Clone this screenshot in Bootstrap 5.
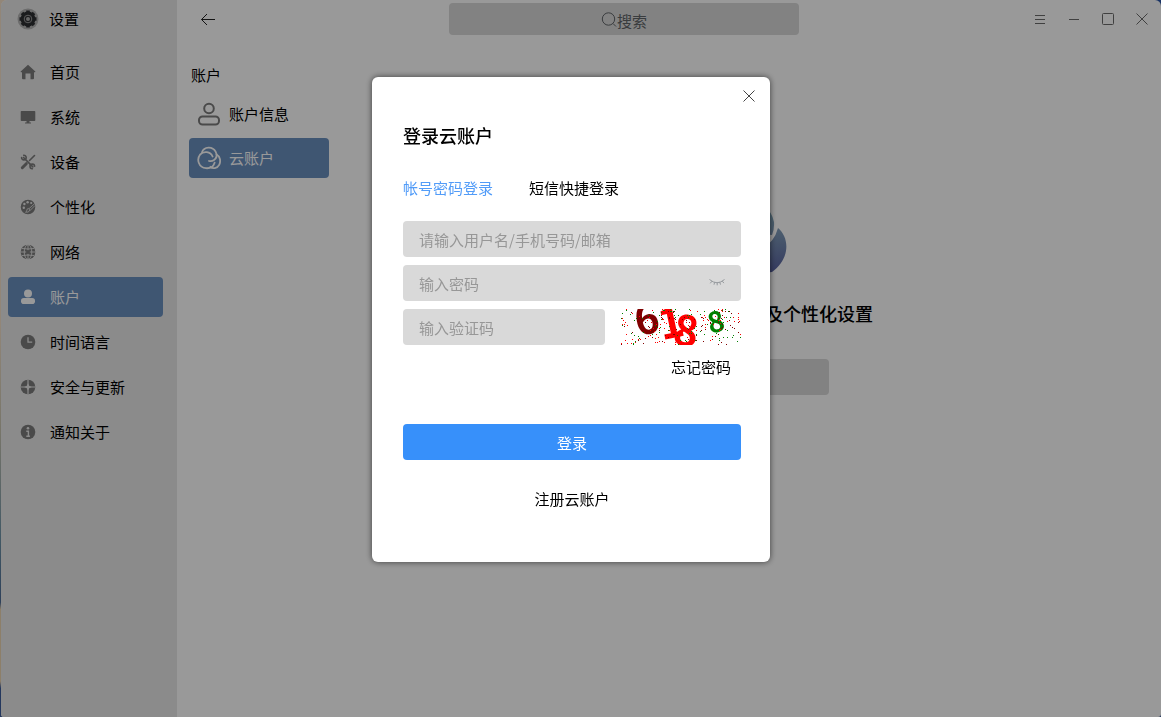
<!DOCTYPE html>
<html lang="zh-CN">
<head>
<meta charset="utf-8">
<meta name="viewport" content="width=device-width, initial-scale=1">
<title>设置</title>
<link href="https://cdn.jsdelivr.net/npm/bootstrap@5.3.0/dist/css/bootstrap.min.css" rel="stylesheet">
<style>
:root{--accent:#698fbf;--field:#d9d9d9}
body{font-family:"Noto Sans CJK SC",sans-serif;font-size:15px;line-height:24px;color:#000;
 background:linear-gradient(#f4e0c8 0 45%,#c8c4b0 60%,#6f94a8 75%,#4d6c96 84%,#ecd4b0 85% 95%,#3c5c9c 96%);}
.desk{padding-left:1px;background:linear-gradient(#2a55a8,#2a55a8) right top/12px 12px no-repeat}
.win{background:#fff;border-radius:6px 6px 3px 3px}
.side{width:176px;background:#e8e8e8;flex:none}
.bar{height:38px}
.main-bar{padding:0 2px 0 14px}
.side .bar{padding-left:16px;gap:10px}
.side-nav{padding:14px 14px 0 7px;gap:5px}
.item{height:40px;border-radius:4px;color:#000;text-decoration:none;display:flex;align-items:center}
.side .item{padding-left:12px;gap:14px}
.item svg{color:#7c7c7c;flex:none}
.item.active,.item.active svg{background:var(--accent);color:#fff}
.sub{width:156px;padding:25px 4px 0 12px;flex:none}
.sub h2{font-size:15px;line-height:24px;margin:0 0 7px 2px;font-weight:400}
.sub .item{padding-left:8px;gap:8px}
.plain{border:0;background:none;padding:0;width:34px;height:34px;display:flex;align-items:center;justify-content:center;color:#444}
.main-bar .plain{color:#6c6c6c}
.find{width:350px;height:32px;background:var(--field);border:0;border-radius:4px;color:#606468}
.cloud{padding-top:164px}
.cloud p{width:252px;font-size:18px;font-weight:500;margin:27px 0 34px;text-align:right}
.cloud button{width:164px;height:36px;border:0;border-radius:4px;background:var(--field)}
.veil{background:rgba(0,0,0,.4);padding:77px 19px 0 0}
.login{width:398px;background:#fff;border-radius:6px;box-shadow:0 0 6px rgba(0,0,0,.6);padding:2px 29px 51px 31px}
.close-row{margin-right:-25px}
.login h1{font-size:18px;line-height:24px;margin:10px 0 29px;font-weight:500}
.tabs{gap:36px;margin-bottom:21px}
.tabs button{border:0;background:none;padding:0;color:#000}
.tabs button.on{color:#529cf8}
.field{height:36px;background:var(--field);border:0;border-radius:4px;padding:0 16px;font-size:15px;color:#000}
.field:focus{background:var(--field);box-shadow:none}
.field::placeholder{color:#979797;opacity:1}
.code{width:202px}
.eye{right:7px;top:1px;color:#8d9296}
.forgot{margin:10px 10px 45px 0}
.go{height:36px;border:0;border-radius:4px;background:#3790fa;color:#fff;padding:2px 0 0;font-size:15px;line-height:24px}
.go:hover{background:#2b84ee;color:#fff}
.reg{margin-top:27px}
</style>
</head>
<body>
<div class="desk min-vh-100 d-flex">
<div class="win d-flex flex-grow-1 overflow-hidden">
 <aside class="side">
  <div class="bar d-flex align-items-center">
   <svg width="22" height="22" viewBox="0 0 22 22"><circle cx="11" cy="11" r="10.5" fill="#b4b4b4"/><g fill="none" stroke="#2d2f32"><circle cx="11" cy="11" r="5.500" stroke-width="3.800"/><path d="M11 2.500v17M2.500 11h17M5 5l12 12M17 5 5 17" stroke-width="3.600"/><circle cx="11" cy="11" r="3.800" fill="#2d2f32" stroke="#999" stroke-width="1"/><circle cx="11" cy="11" r="2" fill="#aaa" stroke="none"/></g></svg>
   <span>设置</span>
  </div>
  <nav class="side-nav d-flex flex-column">
   <a class="item" href="#"><svg width="16" height="16" viewBox="0 0 16 16" fill="currentColor"><path d="M8 .7 15.3 7.4q.4.8-.4.8H14v6q0 1-1 1h-2.500V9.500h-5v5.700H3q-1 0-1-1v-6h-.9q-.8 0-.4-.8z"/></svg>首页</a>
   <a class="item" href="#"><svg width="16" height="16" viewBox="0 0 16 16" fill="currentColor"><path d="M1.500 2h13q.8 0 .8.8v8.400q0 .8-.8.800H9.500v1.500H11V14.500H5V13.500h1.500V12h-5q-.8 0-.8-.8V2.800q0-.8.8-.8z"/></svg>系统</a>
   <a class="item" href="#"><svg width="16" height="16" viewBox="0 0 16 16" fill="none" stroke="currentColor" stroke-linecap="round"><path d="M3.500 3.500 12.800 12.800" stroke-width="1.700"/><path d="M2.300 13.700 6.300 9.700" stroke-width="3"/><path d="M9.500 6.500 14.500 1.500" stroke-width="1.600"/><path d="M1.600 3.500a2.300 2.300 0 1 0 2.100-2.200M14.600 12.300a2.300 2.300 0 1 0-2.200 2.400" stroke-width="1.600"/></svg>设备</a>
   <a class="item" href="#"><svg width="16" height="16" viewBox="0 0 16 16"><path fill="currentColor" d="M8 .7A7.300 7.300 0 1 0 15.300 8C15.300 3.500 12 .7 8 .7z"/><g fill="#e8e8e8"><circle cx="3.800" cy="8.700" r="1.200"/><circle cx="4.400" cy="5" r="1.200"/><circle cx="7.600" cy="3.300" r="1.200"/><circle cx="11.200" cy="4" r="1.100"/></g><path d="M14.800 4.500 8 10.600M15 6.500 9.500 12" stroke="#e8e8e8" stroke-width=".8"/><path d="M8.300 9.400 9.800 11Q9 14 5.500 13.200 7 12.500 6.800 11.200 7.200 9.500 8.300 9.400z" fill="currentColor" stroke="#e8e8e8" stroke-width=".8"/></svg>个性化</a>
   <a class="item" href="#"><svg width="16" height="16" viewBox="0 0 16 16"><circle cx="8" cy="8" r="7.300" fill="currentColor"/><g fill="none" stroke="#e8e8e8" stroke-width=".9"><ellipse cx="8" cy="8" rx="3.800" ry="7.300"/><path d="M8 .5v15M.5 8h15M2 4.500Q8 5.500 14 4.500M2 11.500Q8 10.500 14 11.500"/></g><circle cx="8" cy="8" r="2" fill="currentColor"/></svg>网络</a>
   <a class="item active" href="#" aria-current="page"><svg width="16" height="16" viewBox="0 0 16 16" fill="currentColor"><circle cx="8" cy="4.500" r="4"/><rect x="1" y="9" width="14" height="6" rx="2.800"/></svg>账户</a>
   <a class="item" href="#"><svg width="16" height="16" viewBox="0 0 16 16"><circle cx="8" cy="8" r="7.300" fill="currentColor"/><path d="M8 3.200V8.200h4.200" fill="none" stroke="#e8e8e8" stroke-width="1.300"/></svg>时间语言</a>
   <a class="item" href="#"><svg width="16" height="16" viewBox="0 0 16 16"><circle cx="8" cy="8" r="7.300" fill="currentColor"/><path d="M8 .7v14.600M.7 8h14.600" stroke="#e8e8e8" stroke-width="1.200"/><path d="M8 4.200 9.200 6.800 11.800 8 9.200 9.200 8 11.800 6.800 9.200 4.200 8 6.800 6.800z" fill="#e8e8e8"/></svg>安全与更新</a>
   <a class="item" href="#"><svg width="16" height="16" viewBox="0 0 16 16"><circle cx="8" cy="8" r="7.300" fill="currentColor"/><circle cx="8" cy="4.200" r="1.300" fill="#e8e8e8"/><path d="M6.300 7.200H8.400V12.300M6.300 12.300h3.600" fill="none" stroke="#e8e8e8" stroke-width="1.400"/></svg>通知关于</a>
  </nav>
 </aside>
 <div class="flex-grow-1 d-flex flex-column">
  <header class="bar main-bar d-flex align-items-center">
   <button class="plain" type="button" aria-label="返回"><svg width="16" height="16" viewBox="0 0 16 16" fill="none" stroke="#222"><path d="M15 8.500H1.500M7 3 1.500 8.500 7 14"/></svg></button>
   <button class="find mx-auto d-flex align-items-center justify-content-center" type="button"><svg width="16" height="16" viewBox="0 0 16 16" fill="none" stroke="currentColor"><circle cx="7.500" cy="8" r="6.200"/><path d="M12 12.500 15 15.500"/></svg><span class="pt-1">搜索</span></button>
   <button class="plain" type="button" aria-label="菜单"><svg width="16" height="16" viewBox="0 0 16 16" stroke="currentColor"><path d="M3 4.500h10M3 8.500h10M3 12.500h10"/></svg></button>
   <button class="plain" type="button" aria-label="最小化"><svg width="16" height="16" viewBox="0 0 16 16" stroke="currentColor"><path d="M3 8.500h10"/></svg></button>
   <button class="plain" type="button" aria-label="最大化"><svg width="16" height="16" viewBox="0 0 16 16" fill="none" stroke="currentColor"><rect x="2.500" y="2.500" width="11" height="11" rx="1"/></svg></button>
   <button class="plain" type="button" aria-label="关闭"><svg width="16" height="16" viewBox="0 0 16 16" stroke="currentColor"><path d="M2.500 2.500 13.500 13.500M13.500 2.500 2.500 13.500"/></svg></button>
  </header>
  <div class="d-flex flex-grow-1">
   <nav class="sub">
    <h2>账户</h2>
    <div class="d-flex flex-column gap-1">
     <a class="item" href="#"><svg width="24" height="24" viewBox="0 0 24 24" fill="none" stroke="currentColor" stroke-width="2"><circle cx="12" cy="6.500" r="4.800"/><rect x="2" y="14.500" width="20" height="8" rx="3.500"/></svg>账户信息</a>
     <a class="item active" href="#" aria-current="page"><svg width="24" height="24" viewBox="0 0 24 24" fill="none" stroke="currentColor" stroke-width="1.800" stroke-linecap="round"><path d="M5 6.200C7 .4 15.500-.2 18.600 5.600c1.700 3.200.9 6.600-1.600 8.500-1.600 1.100-3.400 1.300-5 .9"/><path d="M15.600 10.500C13.500 5.300 6.500 4.600 3 8.700-.6 13.400 1.600 21.500 9 22.200c4 .3 7.500-1.900 8.600-5.500"/><path d="M19.600 8.500C23.200 10.400 24 15.300 22.200 18.800 20.200 22.600 15.500 23 13.400 20.800"/></svg>云账户</a>
    </div>
   </nav>
   <main class="cloud flex-grow-1 d-flex flex-column align-items-center">
    <svg width="80" height="72" viewBox="0 0 80 72"><defs><linearGradient id="lg" gradientUnits="userSpaceOnUse" x1="0" y1="0" x2="0" y2="70"><stop offset="0" stop-color="#81aebc"/><stop offset=".4" stop-color="#7f9cb8"/><stop offset="1" stop-color="#5862a0"/></linearGradient></defs><path d="M12 20A28 28 0 0 1 67 20Q67.500 27 65 33L34 30 10 42z" fill="url(#lg)"/><path d="M71 26C83 36 83 57 65 70L50 72H28C-6 66-2 30 18 26L46 50Q66 45 71 26z" fill="url(#lg)"/></svg>
    <p>及个性化设置</p>
    <button type="button" aria-label="登录"></button>
   </main>
  </div>
 </div>
</div>
</div>

<div class="veil position-fixed top-0 start-0 w-100 h-100 d-flex justify-content-center align-items-start overflow-auto">
 <form class="login" role="dialog" aria-labelledby="dlg" onsubmit="return false">
  <div class="close-row d-flex justify-content-end"><button class="plain" type="button" aria-label="关闭"><svg width="16" height="16" viewBox="0 0 16 16" stroke="currentColor"><path d="M2.500 2.500 13.500 13.500M13.500 2.500 2.500 13.500"/></svg></button></div>
  <h1 id="dlg">登录云账户</h1>
  <div class="tabs d-flex" role="tablist"><button class="on" type="button" role="tab" aria-selected="true">帐号密码登录</button><button type="button" role="tab" aria-selected="false">短信快捷登录</button></div>
  <div class="d-flex flex-column gap-2">
   <input class="form-control field" type="text" aria-label="用户名" placeholder="请输入用户名/手机号码/邮箱">
   <div class="position-relative"><input class="form-control field" type="password" aria-label="密码" placeholder="输入密码">
    <button class="plain eye position-absolute" type="button" aria-label="显示密码"><svg width="16" height="16" viewBox="0 0 16 16" fill="none" stroke="currentColor" stroke-width=".9"><path d="M.5 4.500Q8 11 15.500 4.500M2.800 6.300 1.300 8.300M5.600 7.400 5 9.700M8.200 7.800V10.300M10.800 7.300 11.500 9.600M13.300 6.200 14.900 8.100"/></svg></button></div>
   <div class="d-flex gap-3">
    <input class="form-control field code" type="text" aria-label="验证码" placeholder="输入验证码">
    <svg id="cap" width="120" height="36" viewBox="0 0 120 36" role="img" aria-label="验证码图片" font-family="'Noto Sans CJK SC',sans-serif" font-weight="700" text-anchor="middle">
     <text x="26" y="25" font-size="42" fill="#800000" transform="rotate(-8 26 10)">6</text>
     <text x="50" y="29" font-size="42" fill="#f00" transform="rotate(-12 50 14)">1</text>
     <text x="65" y="37" font-size="42" fill="#f00" transform="rotate(8 65 22)">8</text>
     <text x="95" y="23" font-size="28" fill="#008000" transform="rotate(-12 95 13)">8</text>
    </svg>
   </div>
  </div>
  <div class="forgot d-flex justify-content-end"><a class="text-black text-decoration-none" href="#">忘记密码</a></div>
  <button class="btn go w-100 d-block" type="submit">登录</button>
  <div class="reg text-center"><a class="text-black text-decoration-none" href="#">注册云账户</a></div>
 </form>
</div>
<script src="https://cdn.jsdelivr.net/npm/bootstrap@5.3.0/dist/js/bootstrap.bundle.min.js"></script>
<script>
// Speckle the verification code with one-pixel dots.
(function(){
  var seed=618, cap=document.getElementById('cap');
  function rnd(n){seed=(seed*1103515245+12345)%2147483648;return Math.floor(seed/2147483648*n);}
  [['#800000',80],['#f00',95],['#008000',85]].forEach(function(c){
    var d='';
    for(var i=0;i<c[1];i++)d+='M'+rnd(120)+' '+rnd(36)+'h1v1h-1z';
    var p=document.createElementNS('http://www.w3.org/2000/svg','path');
    p.setAttribute('d',d);p.setAttribute('fill',c[0]);p.setAttribute('shape-rendering','crispEdges');cap.appendChild(p);
  });
})();
</script>
</body>
</html>
